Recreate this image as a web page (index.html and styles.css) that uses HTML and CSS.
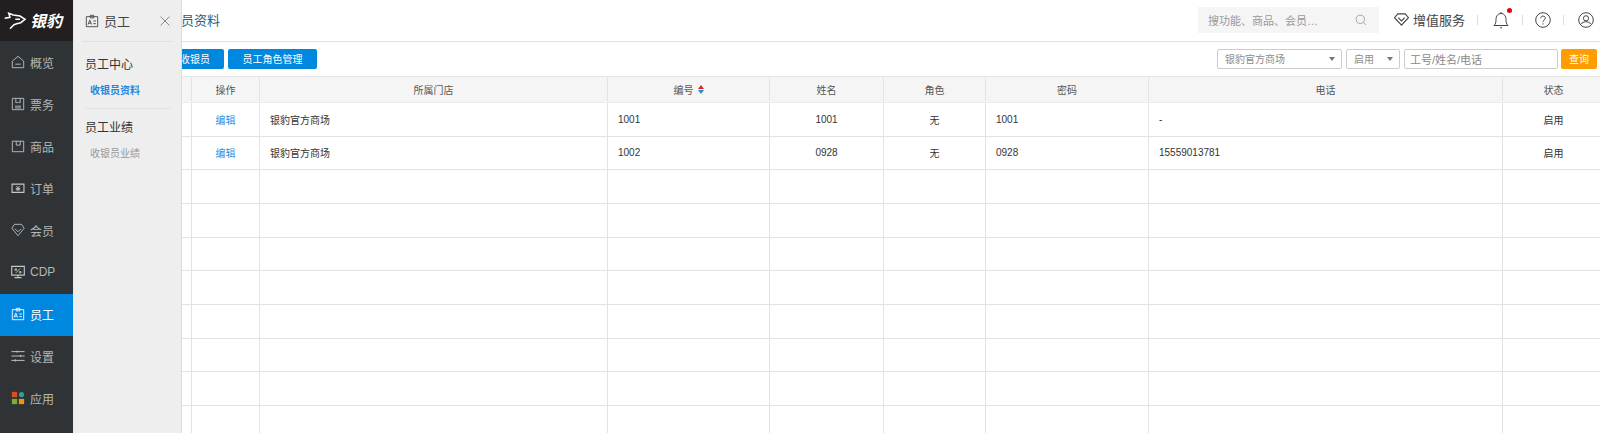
FILE: index.html
```html
<!DOCTYPE html>
<html lang="zh">
<head>
<meta charset="utf-8">
<title>收银员资料</title>
<link rel="stylesheet" href="styles.css">
</head>
<body>
<div class="app">
  <aside class="sidebar">
    <div class="logo">
      <svg class="logo-mark" viewBox="0 0 22 19"><path d="M.7 6.300 6 5.300 4.700 1.300 9.300 3 16 4 21 7.300 16.700 10.700 12.700 11.700 10 12.700 6 16.700M11.300 7.300H16"/></svg>
      <span class="logo-text">银豹</span>
    </div>
    <nav class="menu">
      <a class="menu-item"><svg viewBox="0 0 16 16"><path d="M1.500 7 8 1.500 14.500 7v7.500h-13z"/><path d="M5 10.500h6"/></svg><span>概览</span></a>
      <a class="menu-item"><svg viewBox="0 0 16 16"><path d="M1.500 1.500h13v13h-13z"/><path d="M5.500 1.500v5h1.500l1-1 1 1h1.500v-5M4.500 10.500h7M4.500 12.500h7"/></svg><span>票务</span></a>
      <a class="menu-item"><svg viewBox="0 0 16 16"><path d="M1.500 2.500h13v12h-13z"/><path d="M6 2.500v4.500h4.500V2.500"/></svg><span>商品</span></a>
      <a class="menu-item"><svg viewBox="0 0 16 16"><path stroke-width="1.300" d="M1.200 3.500h13.600v9.500H1.200z"/><path d="M6 5.500 8 8l2-2.500M5.500 8.500h5M5.500 10h5M8 8v3.500"/></svg><span>订单</span></a>
      <a class="menu-item"><svg viewBox="0 0 16 16"><path d="M4 1.500h8l3 4.500-7 8.500L1 6z"/><path d="M4.500 6.500 8 10l3.500-3.500"/></svg><span>会员</span></a>
      <a class="menu-item"><svg viewBox="0 0 16 16"><path stroke-width="1.300" d="M.8 1.500h14.400v10H.8zM8 11.500v3M4 14.500h8"/><path d="M5.500 9 10.500 4M4.500 4.500h2v1.500h-2zM9.500 7.500h2V9h-2z"/></svg><span>CDP</span></a>
      <a class="menu-item active"><svg viewBox="0 0 16 16"><path d="M1.500 3h13v11.500h-13zM6 1.500h4v3H6z"/><path d="M3.500 12 5.500 7l2 5M4.300 10.500h2.400M9.500 8h3M9.500 11h3"/></svg><span>员工</span></a>
      <a class="menu-item"><svg viewBox="0 0 16 16"><path d="M.5 3h15M.5 8h15M.5 13h15M7 1.800v2.400M11 6.800v2.400M5 11.800v2.400" stroke-width="1.100"/></svg><span>设置</span></a>
      <a class="menu-item"><svg class="apps" viewBox="0 0 16 16"><rect x="1" y="1" width="6" height="6" fill="#d9501f"/><circle cx="12" cy="4" r="3" fill="#2fa295"/><rect x="1" y="9" width="6" height="6" fill="#7cab3a"/><rect x="9" y="9" width="6" height="6" fill="#ee9514"/></svg><span>应用</span></a>
    </nav>
  </aside>

  <main class="main">
    <header class="topbar">
      <h1 class="page-title">收银员资料</h1>
      <div class="top-tools">
        <div class="search"><span>搜功能、商品、会员…</span>
          <svg viewBox="0 0 14 14"><circle cx="6.200" cy="6.200" r="4.800"/><path d="m9.800 9.800 3 3"/></svg></div>
        <div class="service">
          <svg viewBox="0 0 16 14"><path d="M4 1h8l3.500 4L8 13 .5 5z"/><path d="M4.500 5 8 8.500 11.500 5"/></svg>
          <span>增值服务</span>
        </div>
        <i class="sep first-sep"></i>
        <div class="tool bell"><svg viewBox="0 0 16 18"><path d="M1 14.500h14c-1.500-1.500-2-3-2-6C13 5 11 2.500 8 2.500S3 5 3 8.500c0 3-.5 4.500-2 6zM8 1v1.500M7 16.800h2"/></svg><b class="dot"></b></div>
        <i class="sep tight"></i>
        <div class="tool"><svg viewBox="0 0 16 16"><circle cx="8" cy="8" r="7.300"/><path d="M5.800 6.200C5.800 3.400 10.300 3.400 10.300 6.200 10.300 8 8 8 8 9.800M8 11.300v1.200"/></svg></div>
        <i class="sep"></i>
        <div class="tool"><svg viewBox="0 0 16 16"><circle cx="8" cy="8" r="7.300"/><circle cx="8" cy="6.300" r="2.600"/><path d="M3.400 12c1-3 8.200-3 9.200 0"/></svg></div>
      </div>
    </header>

    <div class="toolbar">
      <div class="actions">
        <button class="btn add">新增收银员</button>
        <button class="btn">员工角色管理</button>
      </div>
      <div class="filters">
        <div class="select store"><span>银豹官方商场</span><i class="caret"></i></div>
        <div class="select status"><span>启用</span><i class="caret"></i></div>
        <div class="input">工号/姓名/电话</div>
        <button class="query">查询</button>
      </div>
    </div>

    <div class="table">
      <div class="row head">
        <div class="c"></div><div class="c">操作</div><div class="c">所属门店</div>
        <div class="c">编号<span class="sort"><i class="up"></i><i class="down"></i></span></div>
        <div class="c">姓名</div><div class="c">角色</div><div class="c">密码</div><div class="c">电话</div><div class="c">状态</div>
      </div>
      <div class="row">
        <div class="c"></div><div class="c link">编辑</div><div class="c l">银豹官方商场</div><div class="c l">1001</div><div class="c">1001</div><div class="c">无</div><div class="c l">1001</div><div class="c l">-</div><div class="c">启用</div>
      </div>
      <div class="row">
        <div class="c"></div><div class="c link">编辑</div><div class="c l">银豹官方商场</div><div class="c l">1002</div><div class="c">0928</div><div class="c">无</div><div class="c l">0928</div><div class="c l">15559013781</div><div class="c">启用</div>
      </div>
      <div class="row"><div class="c"></div><div class="c"></div><div class="c"></div><div class="c"></div><div class="c"></div><div class="c"></div><div class="c"></div><div class="c"></div><div class="c"></div></div>
      <div class="row"><div class="c"></div><div class="c"></div><div class="c"></div><div class="c"></div><div class="c"></div><div class="c"></div><div class="c"></div><div class="c"></div><div class="c"></div></div>
      <div class="row"><div class="c"></div><div class="c"></div><div class="c"></div><div class="c"></div><div class="c"></div><div class="c"></div><div class="c"></div><div class="c"></div><div class="c"></div></div>
      <div class="row"><div class="c"></div><div class="c"></div><div class="c"></div><div class="c"></div><div class="c"></div><div class="c"></div><div class="c"></div><div class="c"></div><div class="c"></div></div>
      <div class="row"><div class="c"></div><div class="c"></div><div class="c"></div><div class="c"></div><div class="c"></div><div class="c"></div><div class="c"></div><div class="c"></div><div class="c"></div></div>
      <div class="row"><div class="c"></div><div class="c"></div><div class="c"></div><div class="c"></div><div class="c"></div><div class="c"></div><div class="c"></div><div class="c"></div><div class="c"></div></div>
      <div class="row"><div class="c"></div><div class="c"></div><div class="c"></div><div class="c"></div><div class="c"></div><div class="c"></div><div class="c"></div><div class="c"></div><div class="c"></div></div>
      <div class="row"><div class="c"></div><div class="c"></div><div class="c"></div><div class="c"></div><div class="c"></div><div class="c"></div><div class="c"></div><div class="c"></div><div class="c"></div></div>
    </div>
  </main>

  <section class="panel">
    <div class="panel-head">
      <svg viewBox="0 0 16 16"><path d="M1.500 3h13v11.500h-13zM6 1.500h4v3H6z"/><path d="M3.500 12 5.500 7l2 5M4.300 10.500h2.400M9.500 8h3M9.500 11h3"/></svg>
      <span class="panel-title">员工</span>
      <svg class="close" viewBox="0 0 10 10"><path d="m.5.500 9 9M9.500.500l-9 9"/></svg>
    </div>
    <div class="group first">
      <h2>员工中心</h2>
      <a class="sub current">收银员资料</a>
    </div>
    <div class="group second">
      <h2>员工业绩</h2>
      <a class="sub">收银员业绩</a>
    </div>
  </section>
</div>
</body>
</html>
```

FILE: styles.css
```css
* { box-sizing: border-box; }
html, body { margin: 0; height: 100%; overflow: hidden; background: #fff; }
body { font-family: "Liberation Sans", "Noto Sans CJK SC", sans-serif; color: #333; }
svg { display: block; fill: none; stroke: currentColor; stroke-width: 1; }
.app { position: relative; display: flex; height: 433px; overflow: hidden; }

.sidebar { flex: 0 0 73px; background: #2f3335; color: #c4c6c7; }
.logo { display: flex; align-items: center; height: 41px; padding: 2px 0 0 4px; background: #231f20; color: #fff; }
.logo-mark { width: 22px; height: 19px; stroke-width: 1.500; flex: none; }
.logo-text { margin-left: 4px; font-size: 16px; font-weight: 700; font-style: italic; line-height: 1; white-space: nowrap; }
.menu { padding-top: 1px; }
.menu-item { display: flex; align-items: center; height: 42px; padding: 0 0 2px 11px; font-size: 12px; }
.menu-item span { color: #b4b6b7; }
.menu-item svg { width: 14px; height: 14px; margin-right: 5px; flex: none; }
.menu-item .apps { stroke: none; }
.menu-item.active { background: #0088e0; color: #fff; }
.menu-item.active span { color: #fff; }

.main { flex: 1; min-width: 0; display: flex; flex-direction: column; }
.topbar { display: flex; align-items: center; justify-content: space-between; height: 42px; border-bottom: 1px solid #e3e3e3; padding: 0 0 2px 82px; flex: none; }
.page-title { margin: 0; font-size: 13px; font-weight: 400; color: #2b5f7d; white-space: nowrap; }
.top-tools { display: flex; align-items: center; padding-right: 6px; color: #444; }
.search { display: flex; align-items: center; justify-content: space-between; width: 181px; height: 26px; padding: 0 12px 0 10px; background: #f5f5f5; color: #999; font-size: 11px; }
.search svg { width: 12px; height: 12px; color: #999; }
.service { display: flex; align-items: center; margin-left: 15px; font-size: 13px; color: #444; }
.service svg { width: 15px; height: 13px; margin-right: 4px; stroke-width: 1.200; }
.sep { width: 1px; height: 10px; margin: 0 14px 0 12px; background: #ddd; }
.sep.first-sep { margin: 0 15px 0 12px; }
.sep.tight { margin-right: 12px; margin-left: 13px; }
.tool { position: relative; width: 16px; height: 18px; display: flex; align-items: center; }
.tool svg { width: 16px; height: 16px; }
.bell svg { height: 18px; }
.dot { position: absolute; top: -3px; right: -3px; width: 5px; height: 5px; border-radius: 50%; background: #e60012; }

.toolbar { display: flex; align-items: center; justify-content: space-between; height: 34px; padding: 0 3px 0 73px; flex: none; }
.actions { display: flex; gap: 4px; }
.btn { height: 20px; border: 0; border-radius: 2px; background: #0088e0; color: #fff; font: inherit; font-size: 10px; padding: 0 0 1px; width: 89px; }
.btn.add { width: 78px; }
.filters { display: flex; align-items: center; gap: 4px; font-size: 10px; color: #8c8c8c; }
.select { position: relative; display: flex; align-items: center; height: 20px; border: 1px solid #ccc; border-radius: 2px; padding: 0 0 1px 7px; background: #fff; }
.store { width: 125px; }
.status { width: 54px; }
.caret { position: absolute; right: 6px; top: 7px; border: 3px solid transparent; border-top: 4px solid #777; border-bottom: 0; }
.input { display: flex; align-items: center; width: 154px; height: 20px; border: 1px solid #ccc; border-radius: 2px; padding: 0 0 1px 5px; font-size: 11px; color: #888; }
.query { width: 36px; height: 20px; margin-left: -1px; border: 0; border-radius: 2px; background: #ff9c00; color: #fff; font: inherit; font-size: 10px; padding: 0 0 1px; }

.table { border-top: 1px solid #e8e8e8; flex: none; }
.row { display: grid; grid-template-columns: 119px 68px 348px 162px 114px 102px 163px 354px 1fr; height: 33.67px; border-bottom: 1px solid #e3e3e3; font-size: 10px; }
.row.head { height: 26px; padding-bottom: 1px; background: #f5f5f5; color: #555; border-bottom-color: #ececec; }
.c { display: flex; align-items: center; justify-content: center; border-right: 1px solid #e3e3e3; white-space: nowrap; }
.c:last-child { border-right: 0; padding-left: 4px; }
.c.l { justify-content: flex-start; padding-left: 10px; }
.link { color: #2b8fe0; }
.sort { display: inline-flex; flex-direction: column; gap: 1px; margin-left: 4px; }
.sort i { border: 3px solid transparent; }
.sort .up { border-bottom: 4px solid #d8232a; border-top: 0; }
.sort .down { border-top: 4px solid #1f93c9; border-bottom: 0; }

.panel { position: absolute; top: 0; left: 73px; bottom: 0; width: 108px; background: #eee; border-left: 1px solid #e9e9e9; box-shadow: 1px 0 0 #ddd; color: #333; }
.panel-head { display: flex; align-items: center; height: 42px; margin: 0 8px; padding-left: 3px; border-bottom: 1px solid #e0e0e0; color: #444; }
.panel-head svg { width: 14px; height: 14px; flex: none; }
.panel-title { margin-left: 5px; font-size: 13px; }
.panel-head .close { width: 10px; height: 10px; margin-left: auto; margin-right: 3px; color: #888; }
.group { margin: 0 10px 0 11px; }
.group h2 { margin: 0; font-size: 12px; font-weight: 400; line-height: 16px; padding-top: 15px; color: #333; }
.sub { display: block; margin-top: 11px; padding-left: 5px; font-size: 10px; line-height: 14px; color: #999; }
.sub.current { color: #1e88e0; font-weight: 700; }
.group.first { padding-bottom: 10px; border-bottom: 1px solid #e0e0e0; }
.group.second h2 { padding-top: 11px; }
```
